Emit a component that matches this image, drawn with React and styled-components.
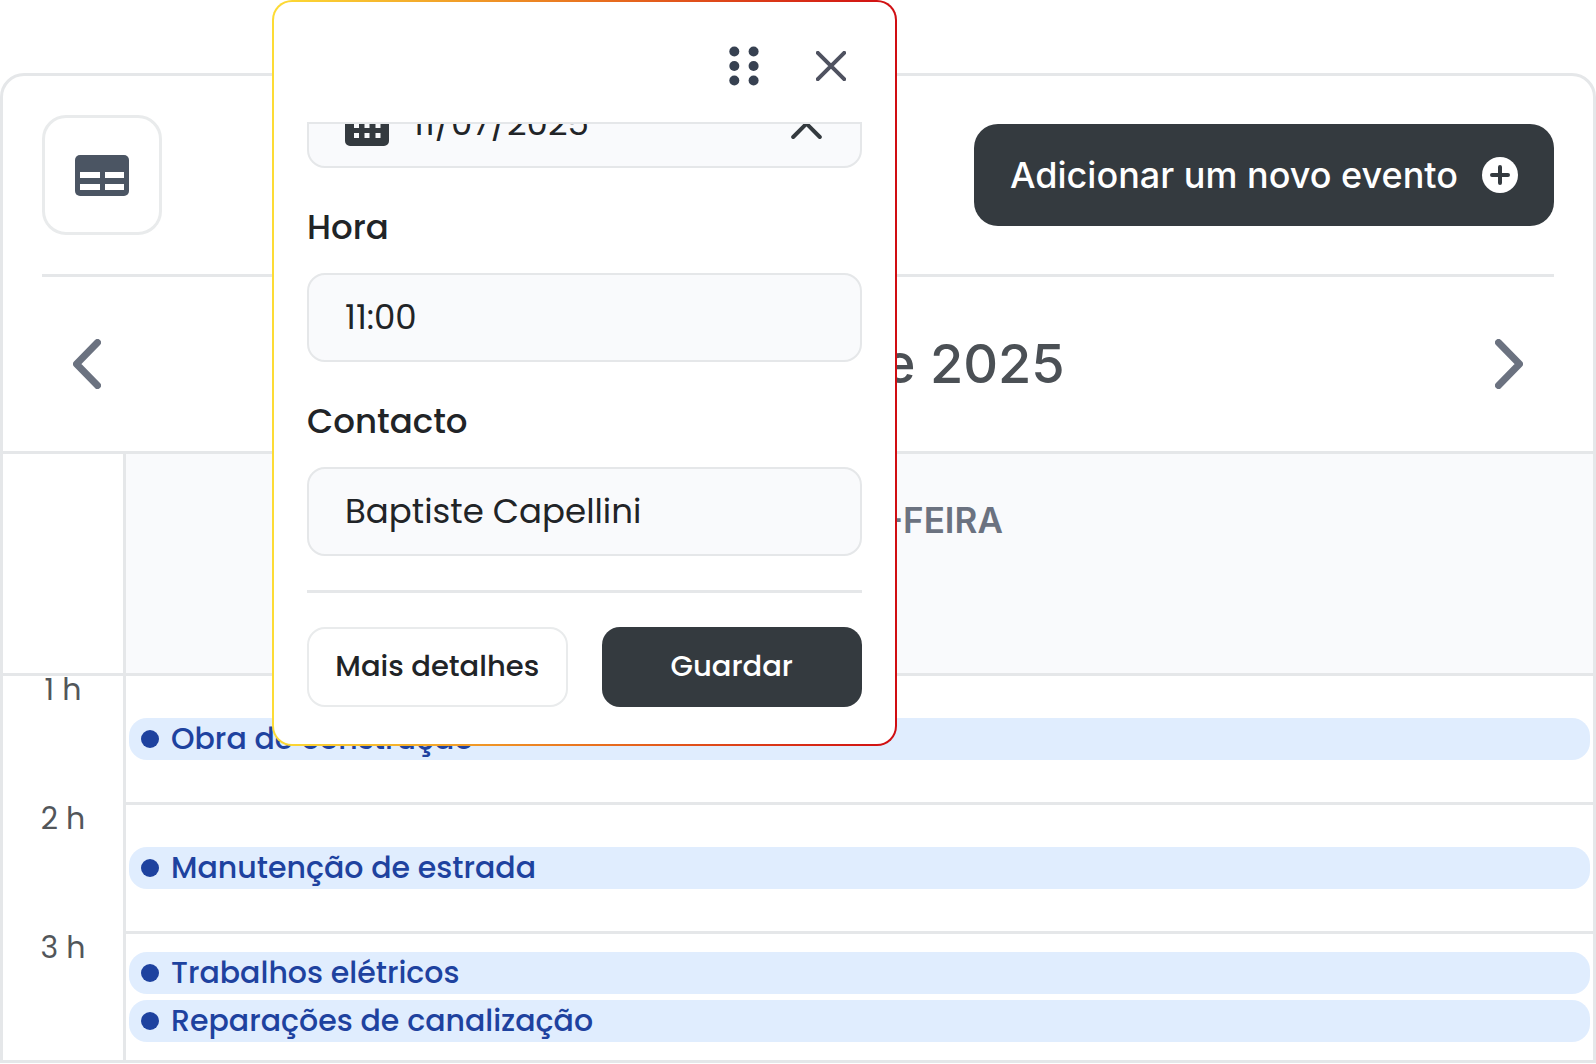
import styled, { createGlobalStyle } from "styled-components";

const line = "#e5e7e9";
const dark = "#343a3f";
const ink = "#212427";

const GlobalStyle = createGlobalStyle`
    * {
        box-sizing: border-box;
    }

    body {
        margin: 0;
        background-color: #fff;
        font-family: Poppins, Inter, sans-serif;
    }

    button, input {
        font-family: inherit;
        margin: 0;
    }

    button {
        cursor: pointer;
    }

    svg {
        display: block;
        flex-shrink: 0;
    }
`;

const Page = styled.div`
    position: relative;
    padding-top: 73px;
`;

const Calendar = styled.main`
    border: 3px solid ${line};
    border-radius: 24px 24px 0 0;
    background-color: #fff;
`;

const Toolbar = styled.header`
    display: flex;
    justify-content: space-between;
    align-items: center;
    margin: 0 39px;
    padding: 39px 0;
    border-bottom: 3px solid ${line};
`;

const ViewButton = styled.button`
    display: flex;
    justify-content: center;
    align-items: center;
    width: 120px;
    height: 120px;
    border: 3px solid #e9ebec;
    border-radius: 24px;
    background-color: #fff;
`;

const AddButton = styled.button`
    display: flex;
    align-items: center;
    gap: 24px;
    height: 102px;
    padding: 0 36px;
    border: none;
    border-radius: 24px;
    background-color: ${dark};
    color: #fff;
    font-family: Inter, sans-serif;
    font-size: 36px;
    font-weight: 500;
`;

const DayNav = styled.nav`
    display: flex;
    justify-content: space-between;
    align-items: center;
    height: 174px;
    padding: 0 70px;
`;

const NavButton = styled.button`
    padding: 0;
    border: none;
    background: none;
`;

const DayTitle = styled.h1`
    margin: 0;
    color: #4b5055;
    font-family: Inter, sans-serif;
    font-size: 54px;
    font-weight: 500;
    line-height: 66px;
`;

const Schedule = styled.table`
    width: 100%;
    table-layout: fixed;
    border-spacing: 0;
    border-top: 3px solid ${line};
`;

const Corner = styled.td`
    width: 123px;
    height: 222px;
    border-right: 3px solid ${line};
    border-bottom: 3px solid ${line};
`;

const DayHead = styled.th`
    padding: 44px 0 0;
    border-bottom: 3px solid ${line};
    background-color: #f9fafc;
    color: #6b7280;
    font-family: Inter, sans-serif;
    font-size: 35px;
    font-weight: 600;
    line-height: 44px;
    vertical-align: top;
`;

const Hour = styled.th`
    padding: 0;
    border-right: 3px solid ${line};
    color: #52565a;
    font-size: 30px;
    font-weight: 400;
    line-height: 28px;
    vertical-align: top;
`;

const Slot = styled.td`
    height: ${({ $last }) => ($last ? "126px" : "129px")};
    padding: 0 3px;
    border-bottom: ${({ $last }) => ($last ? "none" : `3px solid ${line}`)};
`;

const EventList = styled.div`
    display: flex;
    flex-direction: column;
    gap: 6px;
`;

const Event = styled.div`
    display: flex;
    align-items: center;
    gap: 12px;
    height: 42px;
    padding: 0 12px;
    border-radius: 18px;
    background-color: #e0edfe;
    color: #1e429f;
    font-size: 30px;
    font-weight: 500;
    line-height: 42px;
    white-space: nowrap;

    &::before {
        content: "";
        width: 18px;
        height: 18px;
        border-radius: 50%;
        background-color: #1e429f;
    }
`;

const Dialog = styled.form`
    position: absolute;
    top: 0;
    left: 272px;
    width: 625px;
    padding: 0 33px 37px;
    border: 2px solid transparent;
    border-radius: 20px;
    background:
        linear-gradient(#fff, #fff) padding-box,
        linear-gradient(90deg, #fddc35, #e8701f 52%, #d00d12) border-box;
`;

const DialogHeader = styled.div`
    display: flex;
    justify-content: flex-end;
    align-items: center;
    gap: 57px;
    height: 120px;
    padding: 8px 16px 0 0;
`;

/* scrolled to the end, so the date field is cut by the top edge */
const DialogBody = styled.div`
    display: flex;
    flex-direction: column;
    justify-content: flex-end;
    height: 434px;
    overflow: hidden;
    border-top: 2px solid ${line};
`;

const DateField = styled.button`
    display: flex;
    flex-shrink: 0;
    align-items: center;
    gap: 24px;
    height: 89px;
    padding: 0 36px;
    border: 2px solid ${line};
    border-radius: 18px;
    background-color: #f9fafc;
    color: ${ink};
    font-size: 34px;

    svg:last-child {
        margin-left: auto;
    }
`;

const Label = styled.label`
    flex-shrink: 0;
    margin: 34px 0 21px;
    color: ${ink};
    font-size: 34px;
    font-weight: 500;
    line-height: 50px;
`;

const Input = styled.input`
    flex-shrink: 0;
    width: 100%;
    height: 89px;
    padding: 0 36px;
    border: 2px solid ${line};
    border-radius: 18px;
    outline: none;
    background-color: #f9fafc;
    color: ${ink};
    font-size: 34px;
`;

const DialogFooter = styled.div`
    display: grid;
    grid-template-columns: 1fr 1fr;
    gap: 34px;
    margin-top: 34px;
    padding-top: 34px;
    border-top: 3px solid ${line};
`;

const FooterButton = styled.button`
    height: 80px;
    padding: 0 0 2px;
    border: ${({ $primary }) => ($primary ? "none" : "2px solid #e9ebec")};
    border-radius: 18px;
    background-color: ${({ $primary }) => ($primary ? dark : "#fff")};
    color: ${({ $primary }) => ($primary ? "#fff" : ink)};
    font-size: 29px;
    font-weight: 500;
    white-space: nowrap;
`;

const TableIcon = () => (
    <svg width="54" height="41" viewBox="0 0 54 41">
        <rect width="54" height="41" rx="5" fill="#4b5563" />
        <path fill="#fff" d="M5 17h20v6H5zM30 17h19v6H30zM5 29h20v6H5zM30 29h19v6H30z" />
    </svg>
);

const PlusIcon = () => (
    <svg width="36" height="36" viewBox="0 0 36 36">
        <circle cx="18" cy="18" r="18" fill="#fff" />
        <path d="M18 10v16M10 18h16" stroke={dark} strokeWidth="4" strokeLinecap="round" />
    </svg>
);

const ArrowIcon = ({ right }) => (
    <svg width="28" height="50" viewBox="0 0 28 50" fill="none">
        <path
            d={right ? "M3.5 3.5L24.5 25L3.5 46.5" : "M24.5 3.5L3.5 25L24.5 46.5"}
            stroke="#6b7280"
            strokeWidth="7"
            strokeLinecap="round"
            strokeLinejoin="round"
        />
    </svg>
);

const DragIcon = () => (
    <svg width="30" height="40" viewBox="0 0 30 40" fill="#374151">
        {[5.5, 20, 34.5].map((y) => (
            <g key={y}>
                <circle cx="5.3" cy={y} r="5" />
                <circle cx="24.6" cy={y} r="5" />
            </g>
        ))}
    </svg>
);

const CloseIcon = () => (
    <svg width="30" height="30" viewBox="0 0 30 30">
        <path d="M1.8 1.8L28.2 28.2M28.2 1.8L1.8 28.2" stroke="#4f5260" strokeWidth="4" strokeLinecap="round" />
    </svg>
);

const CalendarIcon = () => (
    <svg width="44" height="44" viewBox="0 0 44 44">
        <path fill={dark} d="M5 5h5V0h5v5h14V0h5v5h5a5 5 0 0 1 5 5v4H0v-4a5 5 0 0 1 5-5zM0 17h44v22a5 5 0 0 1-5 5H5a5 5 0 0 1-5-5z" />
        <path fill="#f9fafc" d="M9 21h5v5H9zM19.500 21h5v5h-5zM30.500 21h5v5h-5zM9 31h5v5H9zM19.500 31h5v5h-5zM30.500 31h5v5h-5z" />
    </svg>
);

const ChevronUpIcon = () => (
    <svg width="33" height="30" viewBox="0 0 33 30" fill="none">
        <path d="M2.200 28L15.500 14.700L28.800 28" stroke={dark} strokeWidth="4" strokeLinecap="round" strokeLinejoin="round" />
    </svg>
);

const hours = [
    { hour: "1 h", events: ["Obra de construção"] },
    { hour: "2 h", events: ["Manutenção de estrada"] },
    { hour: "3 h", events: ["Trabalhos elétricos", "Reparações de canalização"] },
];

const App = () => {
    return (
        <Page>
            <GlobalStyle />
            <Calendar>
                <Toolbar>
                    <ViewButton type="button"><TableIcon /></ViewButton>
                    <AddButton type="button">Adicionar um novo evento<PlusIcon /></AddButton>
                </Toolbar>

                <DayNav>
                    <NavButton type="button"><ArrowIcon /></NavButton>
                    <DayTitle>23 de junho de 2025</DayTitle>
                    <NavButton type="button"><ArrowIcon right /></NavButton>
                </DayNav>

                <Schedule>
                    <thead>
                        <tr>
                            <Corner />
                            <DayHead scope="col">SEGUNDA-FEIRA</DayHead>
                        </tr>
                    </thead>
                    <tbody>
                        {hours.map(({ hour, events }, index) => (
                            <tr key={hour}>
                                <Hour scope="row">{hour}</Hour>
                                <Slot $last={index === hours.length - 1}>
                                    <EventList>
                                        {events.map((name) => <Event key={name}>{name}</Event>)}
                                    </EventList>
                                </Slot>
                            </tr>
                        ))}
                    </tbody>
                </Schedule>
            </Calendar>

            <Dialog>
                <DialogHeader>
                    <NavButton type="button"><DragIcon /></NavButton>
                    <NavButton type="button"><CloseIcon /></NavButton>
                </DialogHeader>
                <DialogBody>
                    <DateField type="button">
                        <CalendarIcon />
                        11/07/2025
                        <ChevronUpIcon />
                    </DateField>
                    <Label htmlFor="time">Hora</Label>
                    <Input id="time" defaultValue="11:00" />
                    <Label htmlFor="contact">Contacto</Label>
                    <Input id="contact" defaultValue="Baptiste Capellini" />
                </DialogBody>
                <DialogFooter>
                    <FooterButton type="button">Mais detalhes</FooterButton>
                    <FooterButton type="button" $primary>Guardar</FooterButton>
                </DialogFooter>
            </Dialog>
        </Page>
    );
};

export default App;
